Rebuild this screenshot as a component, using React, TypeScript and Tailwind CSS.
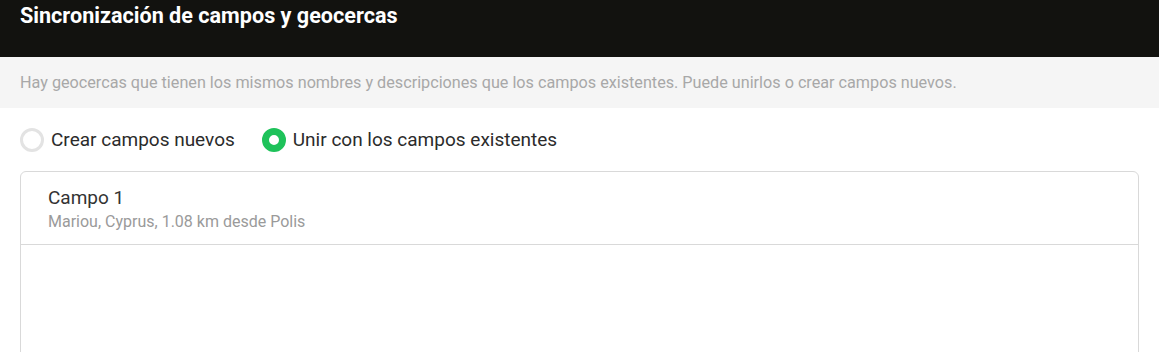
export default function App() {
  return (
    <div className="w-[1159px] h-[352px] overflow-hidden bg-white" style={{ fontFamily: 'Roboto, "Liberation Sans", sans-serif' }}>
      <div className="h-[57px] bg-[#12120f] px-5 pt-[2px]">
        <h1 className="text-[21.6px] leading-[28px] font-bold text-white">Sincronización de campos y geocercas</h1>
      </div>
      <div className="h-[51px] bg-[#f5f5f5] px-5 flex items-center">
        <p className="text-[16.2px] leading-6 text-[#a8a8a8]">Hay geocercas que tienen los mismos nombres y descripciones que los campos existentes. Puede unirlos o crear campos nuevos.</p>
      </div>
      <div className="px-5 pt-5">
        <div className="flex items-center h-6 gap-[27px]">
          <label className="flex items-center gap-[7px]">
            <span className="w-6 h-6 rounded-full border-[3px] border-[#e3e3e3] box-border" />
            <span className="text-[19px] leading-6 text-[#2b2b2b]">Crear campos nuevos</span>
          </label>
          <label className="flex items-center gap-[7px]">
            <span className="w-6 h-6 rounded-full border-[7px] border-[#1ec25a] box-border bg-white" />
            <span className="text-[19px] leading-6 text-[#2b2b2b]">Unir con los campos existentes</span>
          </label>
        </div>
        <div className="mt-[19px] border border-[#d9d9d9] rounded-[6px] h-[300px]">
          <div className="h-[73px] border-b border-[#d9d9d9] px-[27px] pt-[14px]">
            <div className="text-[19px] leading-[24px] text-[#333333]">Campo 1</div>
            <div className="text-[16px] leading-[20px] text-[#9a9a9a] mt-[2px]">Mariou, Cyprus, 1.08 km desde Polis</div>
          </div>
        </div>
      </div>
    </div>
  );
}
